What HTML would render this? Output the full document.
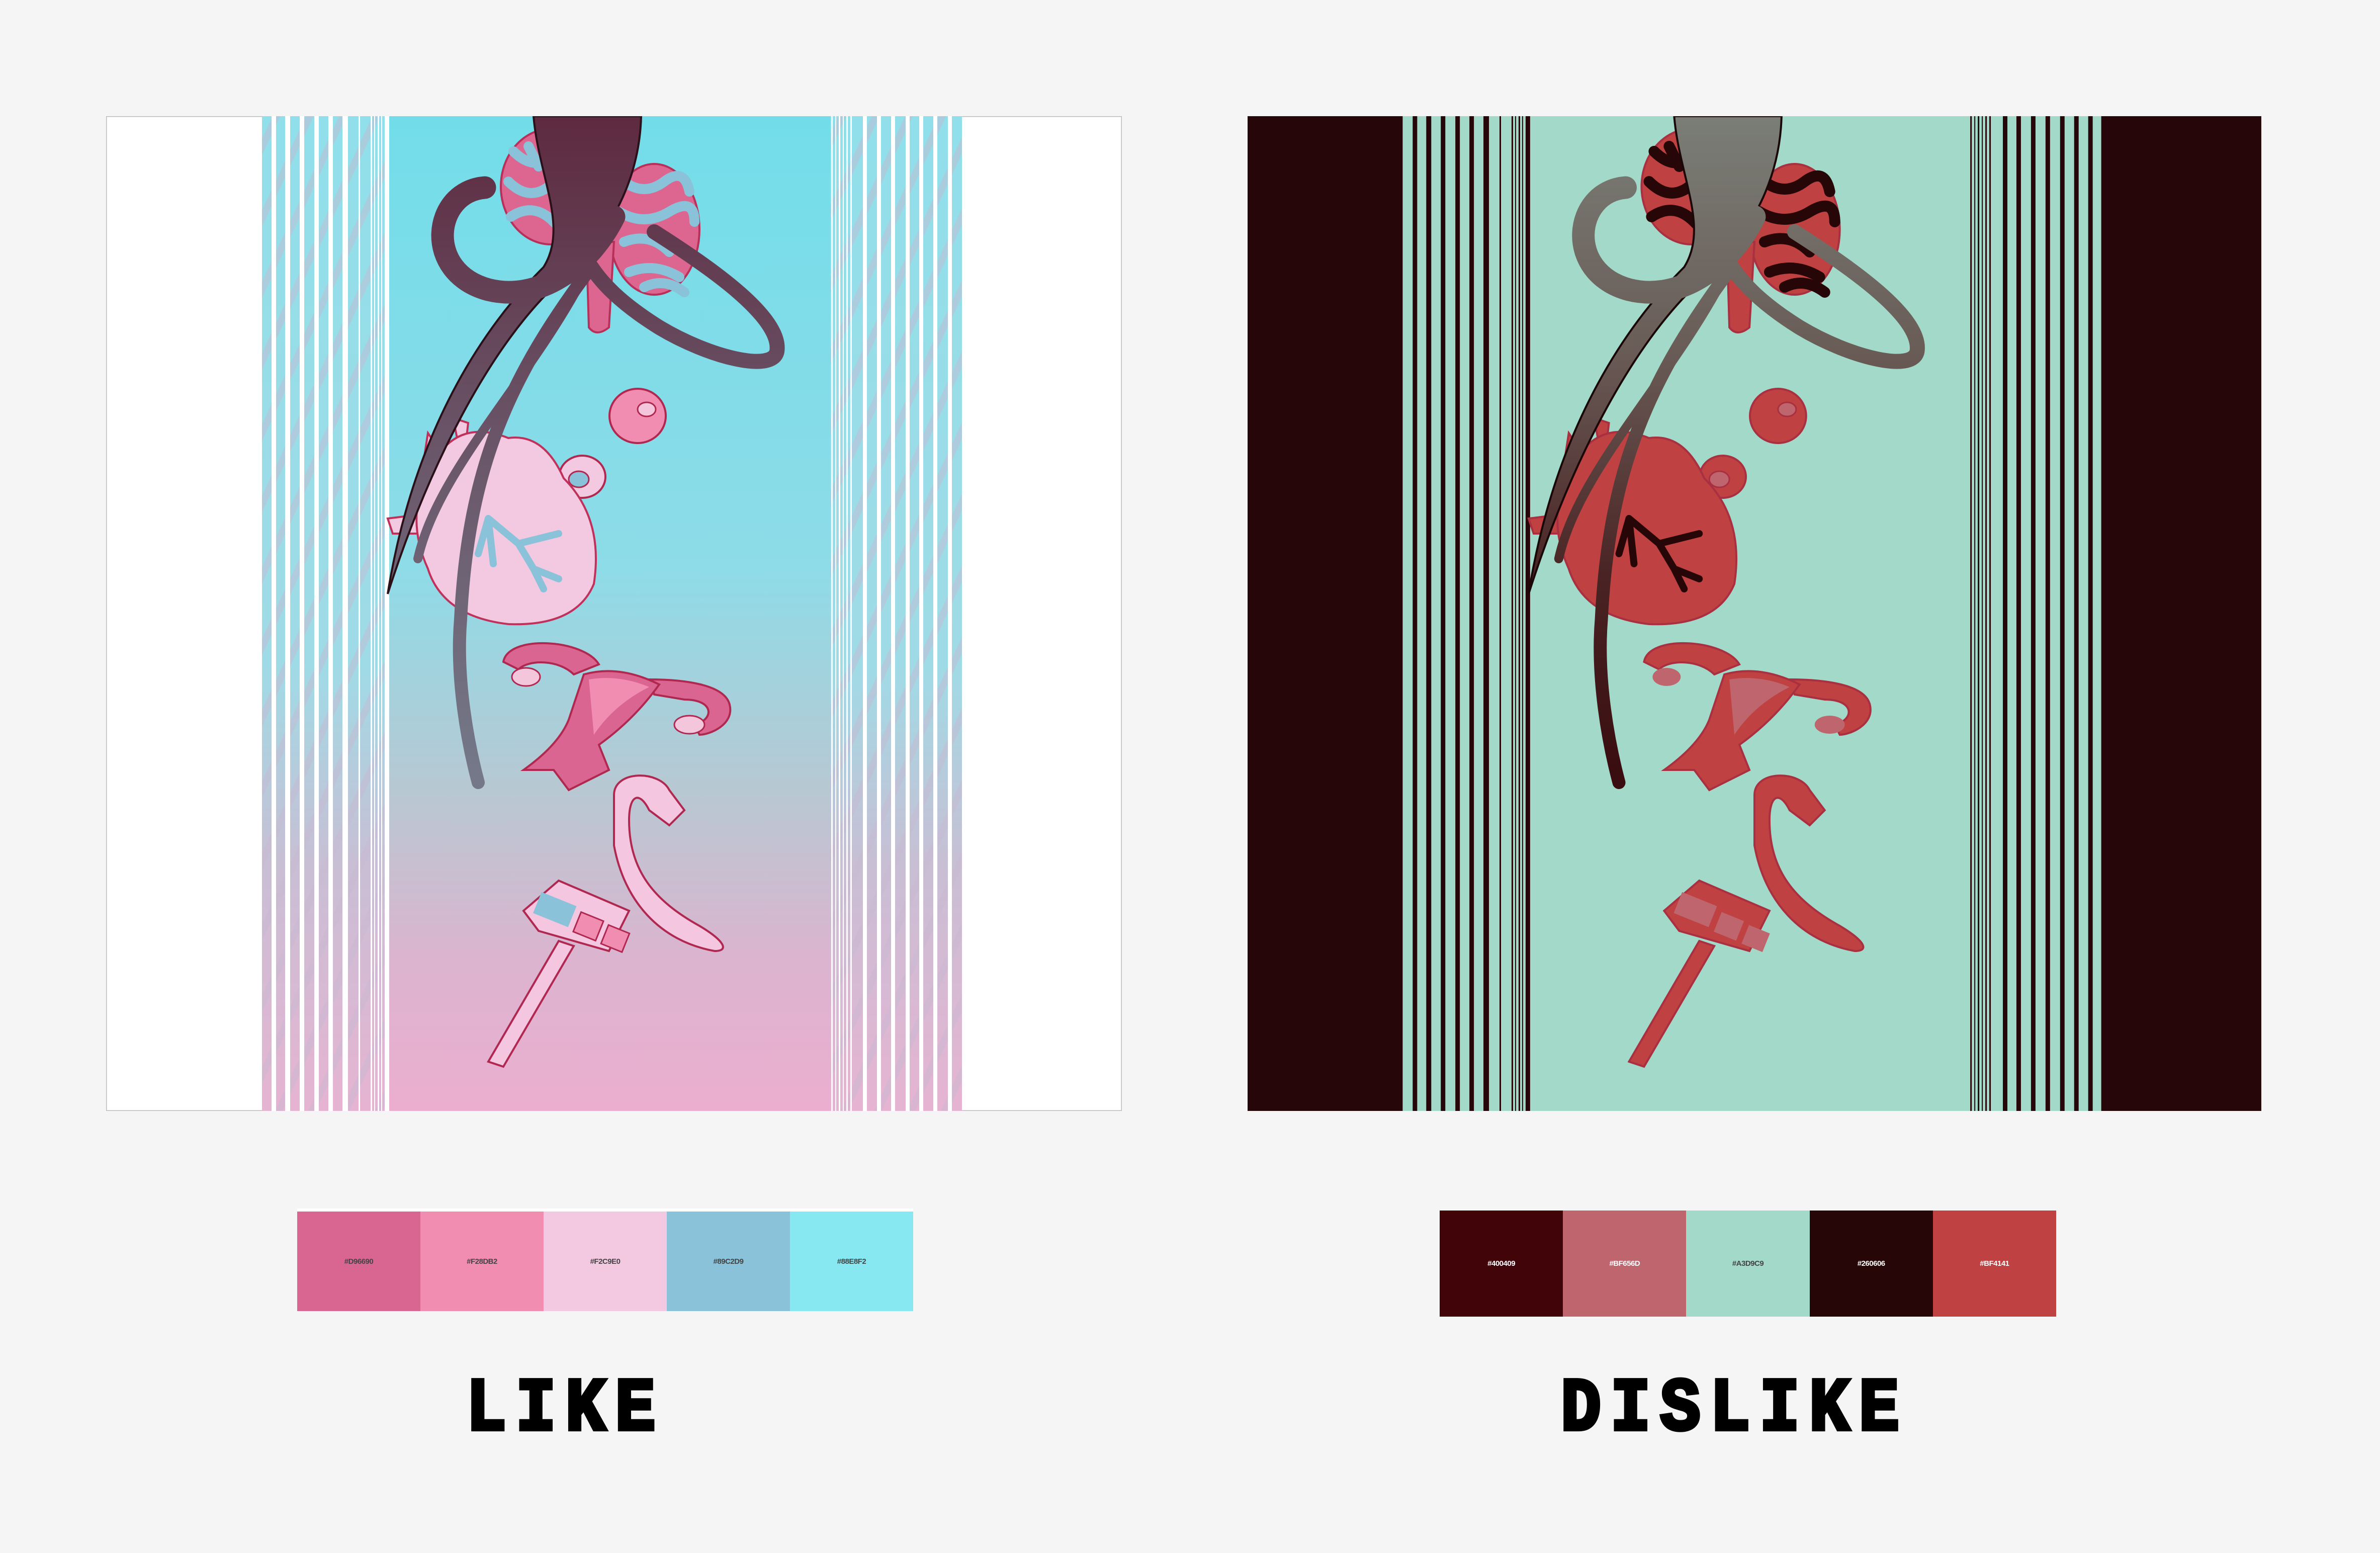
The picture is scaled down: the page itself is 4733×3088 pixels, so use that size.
<!DOCTYPE html>
<html><head><meta charset="utf-8">
<style>
html,body{margin:0;padding:0;}
body{width:4733px;height:3088px;background:#f5f5f5;position:relative;overflow:hidden;font-family:"Liberation Sans",sans-serif;}
.panel{position:absolute;top:231px;height:1978px;}
#p1{left:211px;width:2020px;}
#p2{left:2481px;width:2016px;}
.pal{position:absolute;display:flex;}
.pal div{flex:1;display:flex;align-items:center;justify-content:center;font-family:"Liberation Sans Narrow","Liberation Sans",sans-serif;font-size:15px;font-weight:bold;letter-spacing:-0.5px;}
#pal1{left:591px;top:2403px;width:1225px;height:198px;border-top:6px solid #fff;}
#pal2{left:2863px;top:2407px;width:1226px;height:211px;}
.word{position:absolute;top:2748px;font-family:"Liberation Mono","DejaVu Sans Mono",monospace;font-weight:bold;font-size:133px;line-height:110px;letter-spacing:19px;color:#000;-webkit-text-stroke:7px #000;white-space:nowrap;transform:scaleY(1.12);transform-origin:50% 50%;}
</style></head><body>

<svg id="p1" class="panel" viewBox="0 0 2020 1978" preserveAspectRatio="none" xmlns="http://www.w3.org/2000/svg">
<defs>
<linearGradient id="bg1" x1="0" y1="0" x2="0" y2="1">
<stop offset="0" stop-color="#72dde9"/><stop offset="0.45" stop-color="#8ddce8"/><stop offset="0.68" stop-color="#b8c8d2"/><stop offset="0.85" stop-color="#dcb4d0"/><stop offset="1" stop-color="#ecaecf"/>
</linearGradient>
<linearGradient id="st1" x1="0" y1="0" x2="0" y2="1">
<stop offset="0" stop-color="#90dfea"/><stop offset="0.55" stop-color="#9fdbe6"/><stop offset="0.75" stop-color="#c8bfd4"/><stop offset="1" stop-color="#e6b4d2"/>
</linearGradient>
<pattern id="diag1" width="60" height="60" patternUnits="userSpaceOnUse" patternTransform="rotate(25)">
<rect width="14" height="60" fill="#c9b9d0" opacity="0.45"/>
</pattern>
<linearGradient id="hair1" x1="0" y1="0" x2="0" y2="1300" gradientUnits="userSpaceOnUse">
<stop offset="0" stop-color="#5e2a40"/><stop offset="0.5" stop-color="#6a5568"/><stop offset="1" stop-color="#747888"/>
</linearGradient>
</defs>
<rect width="2020" height="1978" fill="#fff" stroke="#bbb" stroke-width="3"/>
<rect x="310" y="0" width="253" height="1978" fill="url(#st1)"/>
<rect x="1440" y="0" width="262" height="1978" fill="url(#st1)"/>
<rect x="310" y="0" width="253" height="1978" fill="url(#diag1)"/>
<rect x="1440" y="0" width="262" height="1978" fill="url(#diag1)"/>
<g fill="#fff">
<rect x="329" y="0" width="9" height="1978"/><rect x="356" y="0" width="10" height="1978"/><rect x="385" y="0" width="9" height="1978"/><rect x="414" y="0" width="9" height="1978"/><rect x="442" y="0" width="9" height="1978"/><rect x="470" y="0" width="11" height="1978"/><rect x="502" y="0" width="3" height="1978"/><rect x="526" y="0" width="3" height="1978"/><rect x="533" y="0" width="2" height="1978"/><rect x="540" y="0" width="3" height="1978"/><rect x="547" y="0" width="2" height="1978"/><rect x="554" y="0" width="9" height="1978"/>
<rect x="1442" y="0" width="3" height="1978"/><rect x="1450" y="0" width="2" height="1978"/><rect x="1457" y="0" width="3" height="1978"/><rect x="1465" y="0" width="2" height="1978"/><rect x="1472" y="0" width="3" height="1978"/><rect x="1480" y="0" width="3" height="1978"/>
<rect x="1505" y="0" width="8" height="1978"/><rect x="1533" y="0" width="8" height="1978"/><rect x="1561" y="0" width="8" height="1978"/><rect x="1590" y="0" width="8" height="1978"/><rect x="1617" y="0" width="8" height="1978"/><rect x="1645" y="0" width="8" height="1978"/><rect x="1674" y="0" width="8" height="1978"/>
</g>
<rect x="563" y="0" width="877" height="1978" fill="url(#bg1)"/>
<g stroke="#b82f5a" stroke-width="4">
<ellipse cx="885" cy="140" rx="100" ry="115" fill="#dc6690"/>
<ellipse cx="1090" cy="225" rx="90" ry="130" fill="#dc6690"/>
<path d="M955 250 L1010 250 L1000 420 Q975 440 960 420 Z" fill="#dc6690"/>
</g>
<g fill="none" stroke="#89c2d9" stroke-width="20" stroke-linecap="round">
<path d="M810 70 Q850 110 890 80 T960 110 M800 130 Q840 170 880 140 T960 180 M805 200 Q850 170 890 210 T950 250 M840 60 L860 100 M1030 130 Q1070 160 1110 130 T1160 150 M1020 190 Q1070 220 1120 190 T1170 210 M1030 250 Q1080 230 1120 270 M1040 310 Q1090 290 1140 320 M1070 340 Q1110 320 1150 350"/>
</g>
<ellipse cx="1057" cy="596" rx="56" ry="54" fill="#f28db2" stroke="#b02850" stroke-width="4"/>
<ellipse cx="1075" cy="583" rx="18" ry="14" fill="#f4c6dc" stroke="#b02850" stroke-width="3"/>
<ellipse cx="947" cy="717" rx="46" ry="42" fill="#f2c9e0" stroke="#b02850" stroke-width="4"/>
<ellipse cx="940" cy="722" rx="20" ry="16" fill="#89c2d9" stroke="#b02850" stroke-width="3"/>
<g fill="#f2c9e0" stroke="#c0305a" stroke-width="4">
<path d="M640 630 L700 720 L620 760 Z"/>
<path d="M560 800 L640 790 L640 830 L570 830 Z"/>
<path d="M690 600 L720 610 L710 700 Z"/>
<path d="M650 690 Q700 600 800 640 Q870 630 910 720 Q990 800 970 930 Q935 1015 800 1010 Q670 995 640 900 Q590 790 650 690 Z"/>
</g>
<g fill="none" stroke="#89c2d9" stroke-width="14" stroke-linecap="round">
<path d="M760 800 L820 850 L900 830 M820 850 L850 900 L870 940 M850 900 L900 920 M760 800 L740 870 M760 800 L770 890"/>
</g>
<g fill="url(#hair1)" stroke="#2a1018" stroke-width="4">
<path d="M850 0 L1064 0 C1060 150 980 260 900 330 C760 460 640 700 560 950 C600 700 700 470 870 300 C920 220 860 120 850 0 Z"/>
</g>
<g fill="none" stroke="url(#hair1)" stroke-linecap="round">
<path d="M753 142 C650 150 630 310 760 345 C860 370 960 300 1010 200" stroke-width="45"/>
<path d="M1090 230 C1200 300 1345 400 1334 468 C1325 510 1200 480 1100 420 C1020 370 985 330 965 300" stroke-width="30"/>
<path d="M965 300 C800 520 720 700 705 1000 C695 1120 720 1250 740 1325" stroke-width="26"/>
<path d="M960 300 C850 520 660 700 620 880" stroke-width="18"/>
</g>
<g fill="#da6590" stroke="#b02850" stroke-width="4">
<path d="M790 1085 C800 1030 950 1040 980 1090 L930 1110 C900 1080 840 1080 820 1100 Z"/>
<path d="M1080 1120 C1150 1120 1230 1130 1240 1170 C1250 1210 1200 1230 1180 1230 L1170 1210 C1210 1200 1210 1160 1150 1160 L1090 1150 Z"/>
<path d="M950 1110 Q1020 1090 1100 1130 Q1050 1200 980 1250 L1000 1300 L920 1340 L890 1300 L830 1300 Q900 1250 920 1200 Z"/>
</g>
<path d="M960 1120 Q1020 1110 1080 1135 Q1010 1170 970 1230 Z" fill="#f28db2"/>
<ellipse cx="835" cy="1115" rx="28" ry="18" fill="#f4c6dc" stroke="#b02850" stroke-width="3"/>
<ellipse cx="1160" cy="1210" rx="30" ry="18" fill="#f4c6dc" stroke="#b02850" stroke-width="3"/>
<g fill="#f4c6e0" stroke="#b02850" stroke-width="4">
<path d="M1010 1350 C1010 1300 1100 1300 1120 1340 L1150 1380 L1120 1410 L1080 1380 C1060 1340 1040 1350 1040 1400 C1040 1500 1090 1560 1180 1610 C1230 1640 1240 1660 1210 1660 C1100 1640 1030 1560 1010 1450 Z"/>
<path d="M830 1580 L900 1520 L1040 1580 L1000 1660 L860 1620 Z"/>
<path d="M900 1640 L930 1650 L790 1890 L760 1880 Z"/>
</g>
<rect x="855" y="1555" width="75" height="45" fill="#89c2d9" transform="rotate(22 892 1577)"/>
<rect x="935" y="1590" width="48" height="42" fill="#f28db2" stroke="#b02850" stroke-width="3" transform="rotate(22 959 1611)"/>
<rect x="990" y="1615" width="45" height="40" fill="#f28db2" stroke="#b02850" stroke-width="3" transform="rotate(22 1012 1635)"/>
</svg>

<svg id="p2" class="panel" viewBox="0 0 2020 1978" preserveAspectRatio="none" xmlns="http://www.w3.org/2000/svg">
<defs>
<linearGradient id="hair2" x1="0" y1="0" x2="0" y2="1300" gradientUnits="userSpaceOnUse">
<stop offset="0" stop-color="#7a7e76"/><stop offset="0.35" stop-color="#6a5d58"/><stop offset="0.7" stop-color="#4a2424"/><stop offset="1" stop-color="#3a0e10"/>
</linearGradient>
</defs>
<rect width="2020" height="1978" fill="#a3d9c9"/>
<rect x="0" y="0" width="309" height="1978" fill="#260608"/>
<rect x="1701" y="0" width="319" height="1978" fill="#260608"/>
<g fill="#260608">
<rect x="329" y="0" width="9" height="1978"/><rect x="356" y="0" width="10" height="1978"/><rect x="385" y="0" width="9" height="1978"/><rect x="414" y="0" width="9" height="1978"/><rect x="442" y="0" width="9" height="1978"/><rect x="470" y="0" width="11" height="1978"/><rect x="502" y="0" width="3" height="1978"/><rect x="526" y="0" width="3" height="1978"/><rect x="533" y="0" width="2" height="1978"/><rect x="540" y="0" width="3" height="1978"/><rect x="547" y="0" width="2" height="1978"/><rect x="554" y="0" width="9" height="1978"/>
<rect x="1440" y="0" width="3" height="1978"/><rect x="1448" y="0" width="2" height="1978"/><rect x="1455" y="0" width="3" height="1978"/><rect x="1463" y="0" width="2" height="1978"/><rect x="1470" y="0" width="3" height="1978"/><rect x="1478" y="0" width="3" height="1978"/>
<rect x="1505" y="0" width="9" height="1978"/><rect x="1532" y="0" width="9" height="1978"/><rect x="1561" y="0" width="9" height="1978"/><rect x="1590" y="0" width="9" height="1978"/><rect x="1619" y="0" width="9" height="1978"/><rect x="1647" y="0" width="9" height="1978"/><rect x="1675" y="0" width="9" height="1978"/>
</g>
<g stroke="#a83040" stroke-width="4" fill="#bf4141">
<ellipse cx="885" cy="140" rx="100" ry="115"/>
<ellipse cx="1090" cy="225" rx="90" ry="130"/>
<path d="M955 250 L1010 250 L1000 420 Q975 440 960 420 Z"/>
</g>
<g fill="none" stroke="#260606" stroke-width="22" stroke-linecap="round">
<path d="M810 70 Q850 110 890 80 T960 110 M800 130 Q840 170 880 140 T960 180 M805 200 Q850 170 890 210 T950 250 M840 60 L860 100 M1030 130 Q1070 160 1110 130 T1160 150 M1020 190 Q1070 220 1120 190 T1170 210 M1030 250 Q1080 230 1120 270 M1040 310 Q1090 290 1140 320 M1070 340 Q1110 320 1150 350"/>
</g>
<ellipse cx="1057" cy="596" rx="56" ry="54" fill="#bf4141" stroke="#a83040" stroke-width="4"/>
<ellipse cx="1075" cy="583" rx="18" ry="14" fill="#bf656d" stroke="#a83040" stroke-width="3"/>
<ellipse cx="947" cy="717" rx="46" ry="42" fill="#bf4141" stroke="#a83040" stroke-width="4"/>
<ellipse cx="940" cy="722" rx="20" ry="16" fill="#bf656d" stroke="#a83040" stroke-width="3"/>
<g fill="#bf4141" stroke="#a83040" stroke-width="4">
<path d="M640 630 L700 720 L620 760 Z"/>
<path d="M560 800 L640 790 L640 830 L570 830 Z"/>
<path d="M690 600 L720 610 L710 700 Z"/>
<path d="M650 690 Q700 600 800 640 Q870 630 910 720 Q990 800 970 930 Q935 1015 800 1010 Q670 995 640 900 Q590 790 650 690 Z"/>
</g>
<g fill="none" stroke="#260606" stroke-width="14" stroke-linecap="round">
<path d="M760 800 L820 850 L900 830 M820 850 L850 900 L870 940 M850 900 L900 920 M760 800 L740 870 M760 800 L770 890"/>
</g>
<g fill="url(#hair2)" stroke="#1a0808" stroke-width="4">
<path d="M850 0 L1064 0 C1060 150 980 260 900 330 C760 460 640 700 560 950 C600 700 700 470 870 300 C920 220 860 120 850 0 Z"/>
</g>
<g fill="none" stroke="url(#hair2)" stroke-linecap="round">
<path d="M753 142 C650 150 630 310 760 345 C860 370 960 300 1010 200" stroke-width="45"/>
<path d="M1090 230 C1200 300 1345 400 1334 468 C1325 510 1200 480 1100 420 C1020 370 985 330 965 300" stroke-width="30"/>
<path d="M965 300 C800 520 720 700 705 1000 C695 1120 720 1250 740 1325" stroke-width="26"/>
<path d="M960 300 C850 520 660 700 620 880" stroke-width="18"/>
</g>
<g fill="#bf4141" stroke="#a83040" stroke-width="4">
<path d="M790 1085 C800 1030 950 1040 980 1090 L930 1110 C900 1080 840 1080 820 1100 Z"/>
<path d="M1080 1120 C1150 1120 1230 1130 1240 1170 C1250 1210 1200 1230 1180 1230 L1170 1210 C1210 1200 1210 1160 1150 1160 L1090 1150 Z"/>
<path d="M950 1110 Q1020 1090 1100 1130 Q1050 1200 980 1250 L1000 1300 L920 1340 L890 1300 L830 1300 Q900 1250 920 1200 Z"/>
</g>
<path d="M960 1120 Q1020 1110 1080 1135 Q1010 1170 970 1230 Z" fill="#bf656d"/>
<ellipse cx="835" cy="1115" rx="28" ry="18" fill="#bf656d"/>
<ellipse cx="1160" cy="1210" rx="30" ry="18" fill="#bf656d"/>
<g fill="#bf4141" stroke="#a83040" stroke-width="4">
<path d="M1010 1350 C1010 1300 1100 1300 1120 1340 L1150 1380 L1120 1410 L1080 1380 C1060 1340 1040 1350 1040 1400 C1040 1500 1090 1560 1180 1610 C1230 1640 1240 1660 1210 1660 C1100 1640 1030 1560 1010 1450 Z"/>
<path d="M830 1580 L900 1520 L1040 1580 L1000 1660 L860 1620 Z"/>
<path d="M900 1640 L930 1650 L790 1890 L760 1880 Z"/>
</g>
<rect x="855" y="1555" width="75" height="45" fill="#bf656d" transform="rotate(22 892 1577)"/>
<rect x="935" y="1590" width="48" height="42" fill="#bf656d" transform="rotate(22 959 1611)"/>
<rect x="990" y="1615" width="45" height="40" fill="#bf656d" transform="rotate(22 1012 1635)"/>
</svg>

<div class="pal" id="pal1">
<div style="background:#d96690;color:#444">#D96690</div>
<div style="background:#f28db2;color:#444">#F28DB2</div>
<div style="background:#f2c9e0;color:#444">#F2C9E0</div>
<div style="background:#89c2d9;color:#444">#89C2D9</div>
<div style="background:#88e8f2;color:#444">#88E8F2</div>
</div>
<div class="pal" id="pal2">
<div style="background:#400409;color:#fff">#400409</div>
<div style="background:#bf656d;color:#fff">#BF656D</div>
<div style="background:#a3d9c9;color:#444">#A3D9C9</div>
<div style="background:#260606;color:#fff">#260606</div>
<div style="background:#bf4141;color:#fff">#BF4141</div>
</div>

<div class="word" style="left:927px;">LIKE</div>
<div class="word" style="left:3104px;">DISLIKE</div>
</body></html>
